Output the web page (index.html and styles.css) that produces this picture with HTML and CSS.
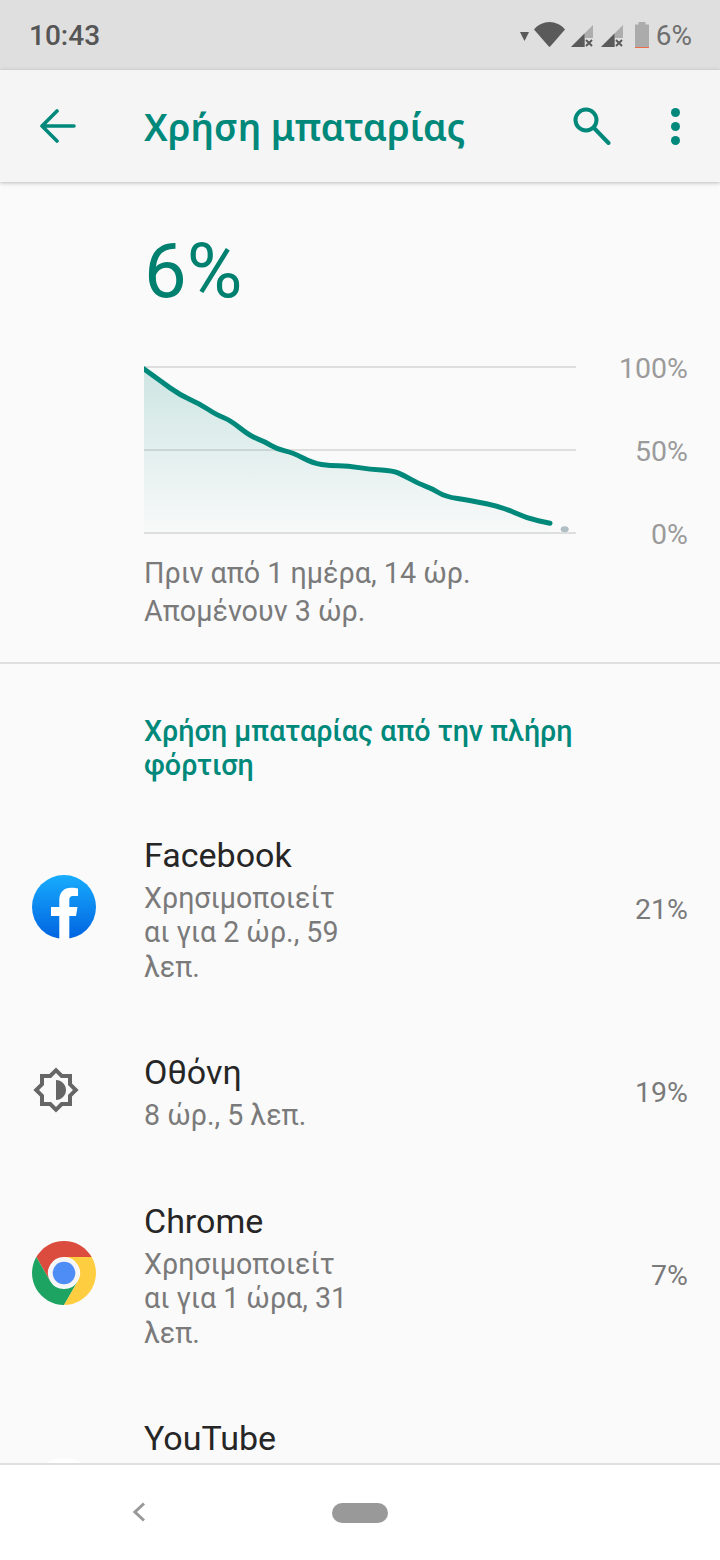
FILE: index.html
```html
<!DOCTYPE html>
<html lang="el">
	<head>
		<meta charset="utf-8">
		<title>Χρήση μπαταρίας</title>
		<link rel="stylesheet" href="styles.css">
	</head>

	<body>
		<div class="status_bar">
			<div class="time">10:43</div>
			<div class="status_icons">
				<svg class="ico_arrow" width="9" height="9" viewBox="0 0 9 9"><path d="M0 0H9L4.5 9Z" fill="#5a5a5a"/></svg>
				<svg class="ico_wifi" width="31" height="25" viewBox="0 0 31 25"><path d="M0 7.5C4 2.8 9.500 0 15.500 0S27 2.800 31 7.500L16.200 24.500Q15.500 25 14.800 24.500Z" fill="#5a5a5a"/></svg>
				<svg class="ico_signal" width="22" height="22" viewBox="0 0 22 22">
					<path d="M22 0V13H14V22H0Z" fill="#adadad"/>
					<path d="M13.500 8.500V22H0Z" fill="#5a5a5a"/>
					<path d="M15 15L21 21M21 15L15 21" stroke="#5a5a5a" stroke-width="2" fill="none"/>
				</svg>
				<svg class="ico_signal" width="22" height="22" viewBox="0 0 22 22">
					<path d="M22 0V13H14V22H0Z" fill="#adadad"/>
					<path d="M13.500 8.500V22H0Z" fill="#5a5a5a"/>
					<path d="M15 15L21 21M21 15L15 21" stroke="#5a5a5a" stroke-width="2" fill="none"/>
				</svg>
				<svg class="ico_battery" width="14" height="26" viewBox="0 0 14 26">
					<path d="M3.500 0H10.500V2.500H14V26H0V2.500H3.500Z" fill="#ababab"/>
					<rect y="25" width="14" height="1" fill="#ee6c47"/>
				</svg>
				<div class="battery_text">6%</div>
			</div>
		</div>

		<div class="toolbar">
			<svg class="back" width="36" height="34" viewBox="0 0 36 34"><path d="M17 2L2 17L17 32M2 17H34" stroke="#00897b" stroke-width="3.600" stroke-linecap="round" stroke-linejoin="round" fill="none"/></svg>
			<h1>Χρήση μπαταρίας</h1>
			<svg class="search" width="38" height="38" viewBox="0 0 38 38"><circle cx="13" cy="13" r="10.500" stroke="#00897b" stroke-width="4" fill="none"/><path d="M21 21L35.500 36" stroke="#00897b" stroke-width="4" stroke-linecap="round" fill="none"/></svg>
			<div class="dots"><span></span><span></span><span></span></div>
		</div>

		<div class="main">
			<div class="hero">
				<div class="level">6%</div>
				<div class="chart_row">
					<svg class="chart" width="432" height="172" viewBox="144 364 432 172">
						<defs>
							<linearGradient id="area" x1="0" y1="0" x2="0" y2="1">
								<stop offset="0" stop-color="#00897b" stop-opacity="0.18"/>
								<stop offset="1" stop-color="#00897b" stop-opacity="0.01"/>
							</linearGradient>
						</defs>
						<rect x="144" y="366" width="432" height="2" fill="#dedede"/>
						<rect x="144" y="449" width="432" height="2" fill="#dedede"/>
						<rect x="144" y="532" width="432" height="2" fill="#dedede"/>
						<path d="M144 368L152 374.850Q160 380.700 170 387.850Q180 395 190 399.500Q200 404 208.350 409.500Q216.700 415 223.350 417.500Q230 420 240 428Q250 436 257.500 438.850Q265 441.700 270.850 445.350Q276.700 449 284.850 450.850Q293 452.700 303 458Q313 463.300 321.500 464.500Q330 465.700 339 465.850Q348 466 359 467.650Q370 469.300 381.500 470Q393 470.700 398 472.850Q403 475 411.500 479.650Q420 484.300 425.850 486.300Q431.700 488.300 438.350 492.500Q445 496.700 457.500 498.500Q470 500.300 486.500 503.800Q503 507.300 514.850 512.800Q526.700 518.300 538.350 520.800L550 523.300V532H144Z" fill="url(#area)"/>
						<path d="M144 369L152 374.850Q160 380.700 170 387.850Q180 395 190 399.500Q200 404 208.350 409.500Q216.700 415 223.350 417.500Q230 420 240 428Q250 436 257.500 438.850Q265 441.700 270.850 445.350Q276.700 449 284.850 450.850Q293 452.700 303 458Q313 463.300 321.500 464.500Q330 465.700 339 465.850Q348 466 359 467.650Q370 469.300 381.500 470Q393 470.700 398 472.850Q403 475 411.500 479.650Q420 484.300 425.850 486.300Q431.700 488.300 438.350 492.500Q445 496.700 457.500 498.500Q470 500.300 486.500 503.800Q503 507.300 514.850 512.800Q526.700 518.300 538.350 520.800L550 523.300" stroke="#00897b" stroke-width="5" stroke-linecap="round" stroke-linejoin="round" fill="none"/>
						<ellipse cx="564.700" cy="529.300" rx="4" ry="3" fill="#b0bec5"/>
					</svg>
					<div class="chart_labels">
						<div>100%</div>
						<div>50%</div>
						<div>0%</div>
					</div>
				</div>
				<div class="chart_text">Πριν από 1 ημέρα, 14 ώρ.</div>
				<div class="chart_text">Απομένουν 3 ώρ.</div>
			</div>

			<div class="section">
				<div class="section_title">Χρήση μπαταρίας από την πλήρη<br>φόρτιση</div>

				<div class="row row_big">
					<div class="row_icon">
						<svg width="64" height="64" viewBox="0 0 64 64">
							<defs>
								<linearGradient id="fb" x1="0" y1="0" x2="0" y2="1">
									<stop offset="0" stop-color="#18acfe"/>
									<stop offset="1" stop-color="#0163e0"/>
								</linearGradient>
							</defs>
							<circle cx="32" cy="32" r="32" fill="url(#fb)"/>
							<path d="M27.300 64V41H19V32H27.300V25C27.300 17 32 12.700 39 12.700C42 12.700 45 13.200 46 13.400V21H41.500C38 21 37.300 23 37.300 25V32H45.500L44 41H37.300V64Z" fill="#fff"/>
						</svg>
					</div>
					<div class="row_text">
						<div class="row_title">Facebook</div>
						<div class="row_sub">Χρησιμοποιείτ<br>αι για 2 ώρ., 59<br>λεπ.</div>
					</div>
					<div class="row_pct">21%</div>
				</div>

				<div class="row row_small">
					<div class="row_icon">
						<svg class="brightness" width="48" height="48" viewBox="0 0 24 24"><path d="M20 15.310L23.310 12L20 8.690V4H15.310L12 .69L8.690 4H4V8.690L.69 12L4 15.310V20H8.690L12 23.310L15.310 20H20ZM18 14.480V18H14.480L12 20.480L9.520 18H6V14.480L3.520 12L6 9.520V6H9.520L12 3.520L14.480 6H18V9.520L20.480 12ZM12 7V17C14.760 17 17 14.760 17 12S14.760 7 12 7Z" fill="#666"/></svg>
					</div>
					<div class="row_text">
						<div class="row_title">Οθόνη</div>
						<div class="row_sub">8 ώρ., 5 λεπ.</div>
					</div>
					<div class="row_pct">19%</div>
				</div>

				<div class="row row_big">
					<div class="row_icon">
						<svg width="64" height="64" viewBox="0 0 64 64">
							<path d="M59.700 16H32A16 16 0 0 0 18.100 40L4.300 16A32 32 0 0 1 59.700 16Z" fill="#db4c3f"/>
							<path d="M4.300 16A32 32 0 0 0 32 64L45.900 40A16 16 0 0 1 18.100 40Z" fill="#1da462"/>
							<path d="M59.700 16H32A16 16 0 0 1 45.900 40L32 64A32 32 0 0 0 59.700 16Z" fill="#ffcd40"/>
							<circle cx="32" cy="32" r="14.500" fill="#f5f5f5"/>
							<circle cx="32" cy="32" r="11.300" fill="#4e8df5"/>
						</svg>
					</div>
					<div class="row_text">
						<div class="row_title">Chrome</div>
						<div class="row_sub">Χρησιμοποιείτ<br>αι για 1 ώρα, 31<br>λεπ.</div>
					</div>
					<div class="row_pct">7%</div>
				</div>

				<div class="row row_last">
					<div class="row_icon">
						<div class="yt_icon"></div>
					</div>
					<div class="row_text">
						<div class="row_title">YouTube</div>
					</div>
				</div>
			</div>
		</div>

		<div class="nav_bar">
			<svg class="nav_back" width="12" height="20" viewBox="0 0 12 20"><path d="M11 1.500L2 10L11 18.500" stroke="#999" stroke-width="3" fill="none"/></svg>
			<div class="nav_home"></div>
		</div>
	</body>
</html>
```

FILE: styles.css
```css
html {
	padding: 0;
	margin: 0;
}

body {
	width: 720px;
	height: 1560px;
	margin: 0;
	overflow: hidden;
	background: #fafafa;
	font-family: 'Roboto', sans-serif;
	display: flex;
	flex-direction: column;
}

.status_bar {
	height: 70px;
	flex: none;
	background: #dfdfdf;
	display: flex;
	align-items: center;
	justify-content: space-between;
	padding: 0 28px 0 29px;
	color: #555;
	font-size: 28px;
}

.time {
	font-weight: 500;
}

.status_icons {
	display: flex;
	align-items: center;
	height: 70px;
}

.ico_arrow {
	margin: 3px 5px 0 0;
}

.ico_wifi {
	margin: 0 6px 0 0;
	position: relative;
	top: -1px;
}

.ico_signal {
	margin: 2px 8px 0 0;
}

.ico_signal + .ico_battery {
	margin: 0 7px 0 4px;
}

.battery_text {
	color: #6f6f6f;
}

.toolbar {
	height: 112px;
	flex: none;
	background: #f5f5f5;
	box-shadow: 0 1px 4px rgba(0, 0, 0, 0.25);
	z-index: 1;
	display: flex;
	align-items: center;
	padding: 0 40px 0 40px;
}

.back {
	flex: none;
}

.toolbar h1 {
	flex: 1;
	margin: 2px 0 0 68px;
	color: #00897b;
	font-family: 'Noto Sans', sans-serif;
	font-weight: 600;
	font-size: 37.200px;
	line-height: 48px;
}

.search {
	flex: none;
	margin-right: 60px;
}

.dots {
	display: flex;
	flex-direction: column;
	gap: 5px;
}

.dots span {
	display: block;
	width: 9px;
	height: 9px;
	border-radius: 50%;
	background: #00897b;
}

.main {
	flex: 1;
	min-height: 0;
	overflow: hidden;
}

.hero {
	height: 480px;
	padding: 0 0 0 144px;
	border-bottom: 2px solid #e0e0e0;
}

.level {
	color: #00806f;
	font-size: 76px;
	line-height: 84px;
	padding-top: 47px;
}

.chart_row {
	display: flex;
	margin-top: 51px;
}

.chart {
	flex: none;
	display: block;
}

.chart_labels {
	width: 112px;
	height: 200px;
	margin-top: -12px;
	margin-bottom: -16px;
	display: flex;
	flex-direction: column;
	justify-content: space-between;
	text-align: right;
	color: #9b9b9b;
	font-size: 28.500px;
	line-height: 34px;
}

.chart_text {
	color: #7a7a7a;
	font-size: 28.700px;
	line-height: 38px;
}

.chart_row + .chart_text {
	margin-top: 18px;
}

.section {
	padding-top: 50px;
}

.section_title {
	padding-left: 144px;
	color: #00897b;
	font-weight: 500;
	font-size: 28.700px;
	line-height: 34px;
	margin-bottom: 19px;
}

.row {
	display: flex;
	align-items: center;
	padding: 0 32px;
}

.row_big {
	height: 217px;
}

.row_small {
	height: 149px;
}

.row_last {
	height: 217px;
	align-items: flex-start;
	padding-top: 34px;
}

.row_icon {
	width: 112px;
	flex: none;
	display: flex;
	align-items: center;
	margin-top: -6px;
}

.row_last .row_icon {
	margin-top: 40px;
}

.row_text {
	flex: 1;
}

.row_title {
	color: #262626;
	font-size: 34px;
	line-height: 40px;
}

.row_sub {
	color: #7a7a7a;
	font-size: 28.600px;
	line-height: 34.500px;
	margin-top: 6px;
}

.row_pct {
	color: #7a7a7a;
	font-size: 28.500px;
}

.yt_icon {
	width: 64px;
	height: 64px;
	border-radius: 50%;
	background: #fff;
}

.nav_bar {
	height: 95px;
	flex: none;
	background: #fff;
	border-top: 2px solid #e0e0e0;
	position: relative;
	display: flex;
	align-items: center;
	justify-content: center;
}

.nav_back {
	position: absolute;
	left: 133px;
	top: 37px;
}

.nav_home {
	width: 56px;
	height: 20px;
	border-radius: 10px;
	background: #999;
}
```
